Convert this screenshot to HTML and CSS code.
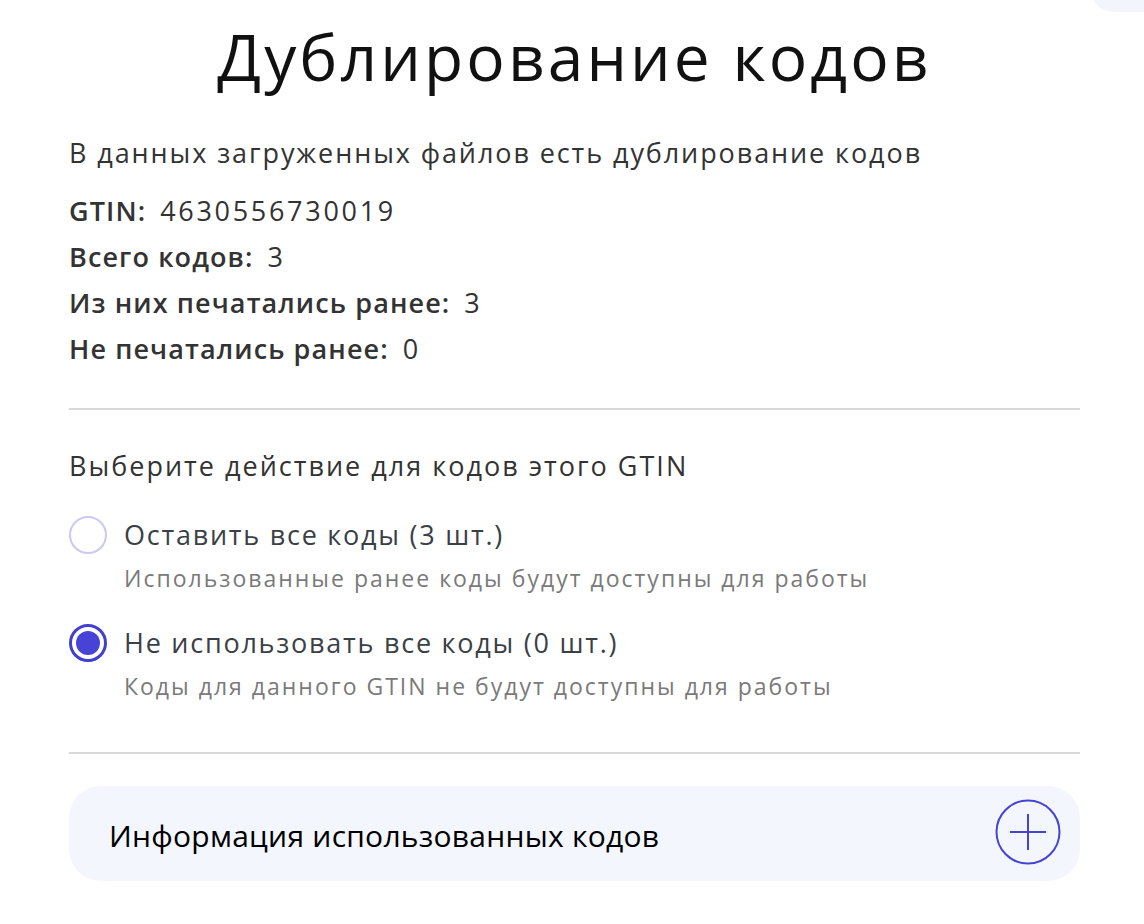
FILE: index.html
```html
<!DOCTYPE html>
<html lang="ru">
<head>
<meta charset="utf-8">
<title>Дублирование кодов</title>
<link rel="stylesheet" href="styles.css">
</head>
<body>
<div class="corner"></div>
<main class="dialog">
  <h1 class="title">Дублирование кодов</h1>
  <p class="intro">В данных загруженных файлов есть дублирование кодов</p>
  <dl class="stats">
    <div class="stat"><dt>GTIN:</dt><dd>4630556730019</dd></div>
    <div class="stat"><dt>Всего кодов:</dt><dd>3</dd></div>
    <div class="stat"><dt>Из них печатались ранее:</dt><dd>3</dd></div>
    <div class="stat"><dt>Не печатались ранее:</dt><dd>0</dd></div>
  </dl>
  <hr class="divider">
  <p class="question">Выберите действие для кодов этого GTIN</p>
  <div class="options">
    <label class="option">
      <span class="radio"></span>
      <span class="option-text">
        <span class="option-title">Оставить все коды (3 шт.)</span>
        <span class="option-sub">Использованные ранее коды будут доступны для работы</span>
      </span>
    </label>
    <label class="option">
      <span class="radio radio-checked"><span class="radio-dot"></span></span>
      <span class="option-text">
        <span class="option-title">Не использовать все коды (0 шт.)</span>
        <span class="option-sub">Коды для данного GTIN не будут доступны для работы</span>
      </span>
    </label>
  </div>
  <hr class="divider divider-bottom">
  <div class="accordion">
    <span class="accordion-title">Информация использованных кодов</span>
    <svg class="plus" width="66" height="66" viewBox="0 0 66 66" aria-hidden="true">
      <circle cx="33" cy="33" r="31.5" fill="none" stroke="#4643d3" stroke-width="2"/>
      <path d="M15 33H51M33 15V51" stroke="#4643d3" stroke-width="2" fill="none"/>
    </svg>
  </div>
</main>
</body>
</html>
```

FILE: styles.css
```css
html, body {
  margin: 0;
  padding: 0;
  background: #ffffff;
}

body {
  font-family: "Open Sans", "Noto Sans", sans-serif;
  color: #333333;
  position: relative;
  overflow: hidden;
  height: 924px;
}

.corner {
  position: absolute;
  top: -40px;
  left: 1090px;
  width: 90px;
  height: 52px;
  border-radius: 24px;
  background: #f3f5fd;
}

.dialog {
  width: 1011px;
  margin-left: 69px;
  padding-top: 17px;
}

.title {
  margin: 0;
  font-size: 64px;
  font-weight: 400;
  line-height: 80px;
  letter-spacing: 3.1px;
  color: #111111;
  text-align: center;
}

.intro {
  margin: 33px 0 0;
  font-size: 27px;
  line-height: 46px;
  letter-spacing: 1.9px;
  color: #333333;
}

.stats {
  margin: 12px 0 0;
}

.stat {
  display: flex;
  gap: 14px;
  font-size: 27px;
  line-height: 46px;
}

.stat dt {
  font-weight: 600;
  letter-spacing: 1.1px;
  color: #333333;
}

.stat dd {
  margin: 0;
  letter-spacing: 2.7px;
  color: #333333;
}

.divider {
  margin: 36px 0 0;
  border: 0;
  border-top: 2px solid #d8d8d8;
  height: 0;
}

.question {
  margin: 33px 0 0;
  font-size: 27px;
  line-height: 46px;
  letter-spacing: 2px;
  color: #333333;
}

.options {
  display: flex;
  flex-direction: column;
  gap: 29px;
  margin-top: 26px;
}

.option {
  display: flex;
  align-items: flex-start;
  gap: 17px;
}

.radio {
  flex: none;
  width: 38px;
  height: 38px;
  margin-top: 1px;
  box-sizing: border-box;
  border: 2px solid #cbc8f5;
  border-radius: 50%;
  display: flex;
  align-items: center;
  justify-content: center;
}

.radio-checked {
  border: 3px solid #4340cf;
}

.radio-dot {
  width: 24px;
  height: 24px;
  border-radius: 50%;
  background: #4643d6;
}

.option-text {
  display: flex;
  flex-direction: column;
  gap: 7px;
}

.option-title {
  font-size: 27px;
  line-height: 40px;
  letter-spacing: 1.75px;
  color: #3b3f46;
}

.option-sub {
  font-size: 23px;
  line-height: 32px;
  letter-spacing: 2px;
  color: #7a7a7a;
}

.divider-bottom {
  margin-top: 50px;
}

.accordion {
  margin-top: 32px;
  height: 95px;
  border-radius: 32px;
  background: #f3f6fd;
  display: flex;
  align-items: center;
  justify-content: space-between;
  padding: 0 19px 0 40px;
}

.accordion-title {
  font-size: 30px;
  line-height: 40px;
  letter-spacing: 0.25px;
  color: #000000;
  margin-top: 4px;
}

.plus {
  display: block;
  margin-top: -3px;
}
```
